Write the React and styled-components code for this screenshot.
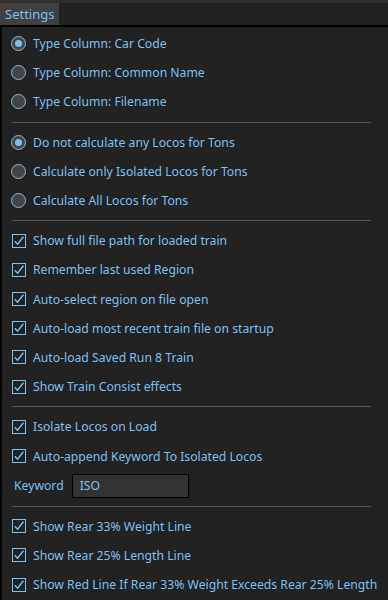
import React from "react";
import styled, { createGlobalStyle } from "styled-components";

const Global = createGlobalStyle`
  html, body { margin: 0; padding: 0; background: #222; }
  body { font-family: "Noto Sans", "Open Sans", sans-serif; }
`;

const Frame = styled.div`
  width: 388px;
  height: 600px;
  background: #222;
  display: flex;
  flex-direction: column;
  overflow: hidden;
  border-top: 3px solid #2f2f2f;
  box-sizing: border-box;
`;

const TabBar = styled.div`
  display: flex;
  height: 22px;
  border-bottom: 2px solid #000;
`;

const Tab = styled.div`
  background: #404040;
  color: #7cc0f0;
  font-size: 13px;
  padding: 0 5px;
  display: flex;
  align-items: center;
`;

const Panel = styled.div`
  flex: 1;
  border-left: 2px solid #000;
  padding: 2px 17px 0 8px;
  display: flex;
  flex-direction: column;
`;

const Row = styled.label`
  display: flex;
  align-items: center;
  height: 29.2px;
  flex-shrink: 0;
  gap: 7px;
  padding-left: 1px;
  color: #7cc0f0;
  font-size: 12.2px;
  white-space: nowrap;
`;

const Radio = styled.span`
  width: 13px;
  height: 13px;
  border-radius: 50%;
  border: 1.5px solid #8ab8d8;
  background: #454545;
  display: flex;
  align-items: center;
  justify-content: center;
  flex-shrink: 0;
  &::after {
    content: "";
    display: ${(p) => (p.$on ? "block" : "none")};
    width: 7px;
    height: 7px;
    border-radius: 50%;
    background: #7cc0f0;
  }
`;

const Box = styled.span`
  width: 14px;
  height: 14px;
  border: 1.5px solid #7cc0f0;
  box-sizing: border-box;
  flex-shrink: 0;
  display: flex;
  align-items: center;
  justify-content: center;
  margin-left: 1px;
`;

const Sep = styled.div`
  height: 1px;
  flex-shrink: 0;
  background: #555;
  margin: 5px 0 5px 2px;
`;

const KeyRow = styled.div`
  display: flex;
  align-items: center;
  flex-shrink: 0;
  gap: 8px;
  height: 30px;
  padding-left: 4px;
  color: #7cc0f0;
  font-size: 12.2px;
`;

const Input = styled.div`
  width: 117px;
  height: 24px;
  background: #333;
  border: 1px solid #000;
  display: flex;
  align-items: center;
  padding-left: 7px;
  box-sizing: border-box;
  font-size: 12.2px;
  color: #7cc0f0;
`;

const RadioRow = ({ on, children }) => (
  <Row>
    <Radio $on={on} />
    {children}
  </Row>
);

const CheckRow = ({ children }) => (
  <Row>
    <Box>
      <svg width="12" height="12" viewBox="0 0 12 12">
        <path d="M1.8 6.2 L4.6 9.2 L10.4 1.8" fill="none" stroke="#7cc0f0" strokeWidth="1.4" />
      </svg>
    </Box>
    {children}
  </Row>
);

export default function App() {
  return (
    <>
      <Global />
      <Frame>
        <TabBar>
          <Tab>Settings</Tab>
        </TabBar>
        <Panel>
          <RadioRow on>Type Column: Car Code</RadioRow>
          <RadioRow>Type Column: Common Name</RadioRow>
          <RadioRow>Type Column: Filename</RadioRow>
          <Sep />
          <RadioRow on>Do not calculate any Locos for Tons</RadioRow>
          <RadioRow>Calculate only Isolated Locos for Tons</RadioRow>
          <RadioRow>Calculate All Locos for Tons</RadioRow>
          <Sep />
          <CheckRow>Show full file path for loaded train</CheckRow>
          <CheckRow>Remember last used Region</CheckRow>
          <CheckRow>Auto-select region on file open</CheckRow>
          <CheckRow>Auto-load most recent train file on startup</CheckRow>
          <CheckRow>Auto-load Saved Run 8 Train</CheckRow>
          <CheckRow>Show Train Consist effects</CheckRow>
          <Sep />
          <CheckRow>Isolate Locos on Load</CheckRow>
          <CheckRow>Auto-append Keyword To Isolated Locos</CheckRow>
          <KeyRow>
            Keyword
            <Input>ISO</Input>
          </KeyRow>
          <Sep />
          <CheckRow>Show Rear 33% Weight Line</CheckRow>
          <CheckRow>Show Rear 25% Length Line</CheckRow>
          <CheckRow>Show Red Line If Rear 33% Weight Exceeds Rear 25% Length</CheckRow>
        </Panel>
      </Frame>
    </>
  );
}
